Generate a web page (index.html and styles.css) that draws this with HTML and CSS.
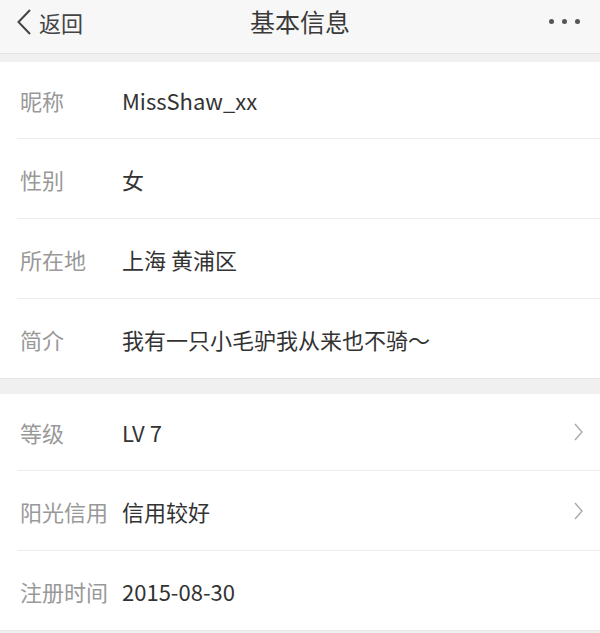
FILE: index.html
```html
<!DOCTYPE html>
<html lang="zh">
<head>
    <meta charset="UTF-8">
    <meta name="viewport" content="width=device-width, initial-scale=1.0">
    <title>基本信息</title>
    <link rel="stylesheet" href="styles.css">
</head>
<body>
<div class="header">
    <div class="back">
        <svg width="16" height="26" viewBox="0 0 16 26"><path d="M14 1 L2.5 13 L14 25" fill="none" stroke="#444" stroke-width="2"/></svg>
        <span>返回</span>
    </div>
    <div class="title">基本信息</div>
    <div class="more"><i></i><i></i><i></i></div>
</div>

<div class="section">
    <div class="row"><span class="label">昵称</span><span class="value">MissShaw_xx</span></div>
    <div class="row"><span class="label">性别</span><span class="value">女</span></div>
    <div class="row"><span class="label">所在地</span><span class="value">上海 黄浦区</span></div>
    <div class="row"><span class="label">简介</span><span class="value">我有一只小毛驴我从来也不骑～</span></div>
</div>

<div class="section">
    <div class="row">
        <span class="label">等级</span><span class="value">LV 7</span>
        <svg class="arrow" width="9" height="18" viewBox="0 0 9 18"><path d="M1 1 L8 9 L1 17" fill="none" stroke="#aaa" stroke-width="1.4"/></svg>
    </div>
    <div class="row">
        <span class="label">阳光信用</span><span class="value">信用较好</span>
        <svg class="arrow" width="9" height="18" viewBox="0 0 9 18"><path d="M1 1 L8 9 L1 17" fill="none" stroke="#aaa" stroke-width="1.4"/></svg>
    </div>
    <div class="row"><span class="label">注册时间</span><span class="value">2015-08-30</span></div>
</div>
</body>
</html>
```

FILE: styles.css
```css
body{
    margin: 0;
    background-color: #f0f0f0;
    font-family: "Noto Sans CJK SC", "Noto Sans", sans-serif;
    height: 633px;
    overflow: hidden;
}

.header{
    height: 53px;
    background-color: #f7f7f7;
    border-bottom: 1px solid #e2e2e2;
    display: flex;
    align-items: flex-start;
    justify-content: space-between;
    padding: 0 16px;
    position: relative;
}
.back{
    display: flex;
    align-items: center;
    gap: 7px;
    margin-top: 9px;
    font-size: 22px;
    line-height: 26px;
    color: #444;
}
.title{
    position: absolute;
    left: 0;
    right: 0;
    top: 4px;
    text-align: center;
    font-size: 25px;
    line-height: 34px;
    color: #3a3a3a;
    pointer-events: none;
}
.more{
    display: flex;
    gap: 8px;
    margin-top: 19px;
    padding-right: 4px;
}
.more i{
    display: block;
    width: 5px;
    height: 5px;
    border-radius: 50%;
    background-color: #555;
}

.section{
    background-color: #fff;
    margin-top: 8px;
    border-bottom: 1px solid #e6e6e6;
}
.section + .section{
    margin-top: 15px;
}

.row{
    height: 79px;
    margin-left: 17px;
    border-bottom: 1px solid #ececec;
    display: flex;
    align-items: center;
    font-size: 22px;
}
.row:first-child{
    height: 76px;
}
.row:last-child{
    border-bottom: none;
}
.label{
    width: 102px;
    padding-left: 3px;
    color: #999;
}
.value{
    flex: 1;
    color: #333;
}
.arrow{
    margin-right: 17px;
}
```
